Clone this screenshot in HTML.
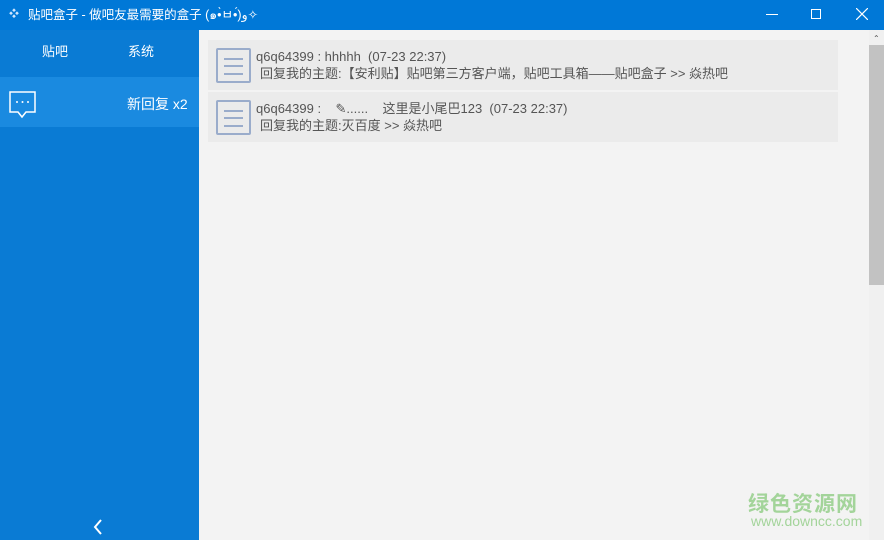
<!DOCTYPE html>
<html><head><meta charset="utf-8"><style>
*{margin:0;padding:0;box-sizing:border-box}
body{width:884px;height:540px;overflow:hidden;position:relative;background:#f3f3f3;font-family:"Liberation Sans","Noto Sans CJK SC",sans-serif}
.title{position:absolute;left:0;top:0;width:884px;height:30px;background:#0078d7;color:#fff;font-size:12.5px;line-height:30px}
.side{position:absolute;left:0;top:30px;width:199px;height:510px;background:#0a7bd4;color:#fff}
.tab{position:absolute;top:11px;font-size:13px}
.sel{position:absolute;left:0;top:47px;width:199px;height:50px;background:#1a8ae0}
.card{position:absolute;left:208px;width:630px;height:50px;background:#ebebeb;font-size:13px;color:#555}
.ic{position:absolute;left:8px;top:8px;width:35px;height:35px;border:2px solid #9aaccb;border-radius:2px}
.ic i{position:absolute;left:6px;width:19px;height:2px;background:#9aaccb}
.l1{position:absolute;left:48px;top:8px;white-space:nowrap;line-height:17px;height:17px}
.l2{position:absolute;left:52px;top:25px;white-space:nowrap;line-height:17px}
.sb{position:absolute;left:869px;top:30px;width:15px;height:510px;background:#f0f0f0}
</style></head><body>
<div class="title"><span style="position:absolute;left:9px;top:0;font-size:10px;color:#cfe6ff">❖</span><span style="position:absolute;left:28px">贴吧盒子 - 做吧友最需要的盒子 (๑•̀ㅂ•́)و✧</span>
<div style="position:absolute;left:766px;top:14px;width:12px;height:1px;background:#fff"></div>
<div style="position:absolute;left:811px;top:9px;width:10px;height:10px;border:1px solid #fff"></div>
<svg style="position:absolute;left:856px;top:8px" width="12" height="12"><path d="M0 0L12 12M12 0L0 12" stroke="#fff" stroke-width="1.2"/></svg></div>
<div class="side">
<div class="tab" style="left:42px">贴吧</div><div class="tab" style="left:128px">系统</div>
<div class="sel"></div>
<svg style="position:absolute;left:9px;top:61px" width="28" height="28"><path d="M1 1H26V21H17L13 26L9 21H1Z" fill="none" stroke="#fff" stroke-width="1.5"/><circle cx="8" cy="11" r="1" fill="#fff"/><circle cx="13.5" cy="11" r="1" fill="#fff"/><circle cx="19" cy="11" r="1" fill="#fff"/></svg>
<div style="position:absolute;left:127px;top:64px;font-size:14px">新回复 x2</div>
<svg style="position:absolute;left:93px;top:489px" width="10" height="16"><path d="M8 1L2 8L8 15" fill="none" stroke="#fff" stroke-width="2"/></svg>
</div>
<div class="card" style="top:40px"><div class="ic"><i style="top:8px"></i><i style="top:15px"></i><i style="top:23px"></i></div>
<div class="l1">q6q64399 : hhhhh &nbsp;(07-23 22:37)</div><div class="l2">回复我的主题:【安利贴】贴吧第三方客户端，贴吧工具箱——贴吧盒子 &gt;&gt; 焱热吧</div></div>
<div class="card" style="top:92px"><div class="ic"><i style="top:8px"></i><i style="top:15px"></i><i style="top:23px"></i></div>
<div class="l1">q6q64399 : &nbsp;&nbsp; ✎...... &nbsp;&nbsp; 这里是小尾巴123 &nbsp;(07-23 22:37)</div><div class="l2">回复我的主题:灭百度 &gt;&gt; 焱热吧</div></div>
<div class="sb"><div style="position:absolute;left:0;top:15px;width:15px;height:240px;background:#c2c2c2"></div>
<div style="position:absolute;left:4px;top:4px;font-size:8px;color:#555">⌃</div></div>
<div style="position:absolute;left:748px;top:488px;font-size:21px;font-weight:bold;color:#a3d49a;letter-spacing:1px">绿色资源网</div>
<div style="position:absolute;left:751px;top:513px;font-size:14px;color:#a3d49a">www.downcc.com</div>
</body></html>
